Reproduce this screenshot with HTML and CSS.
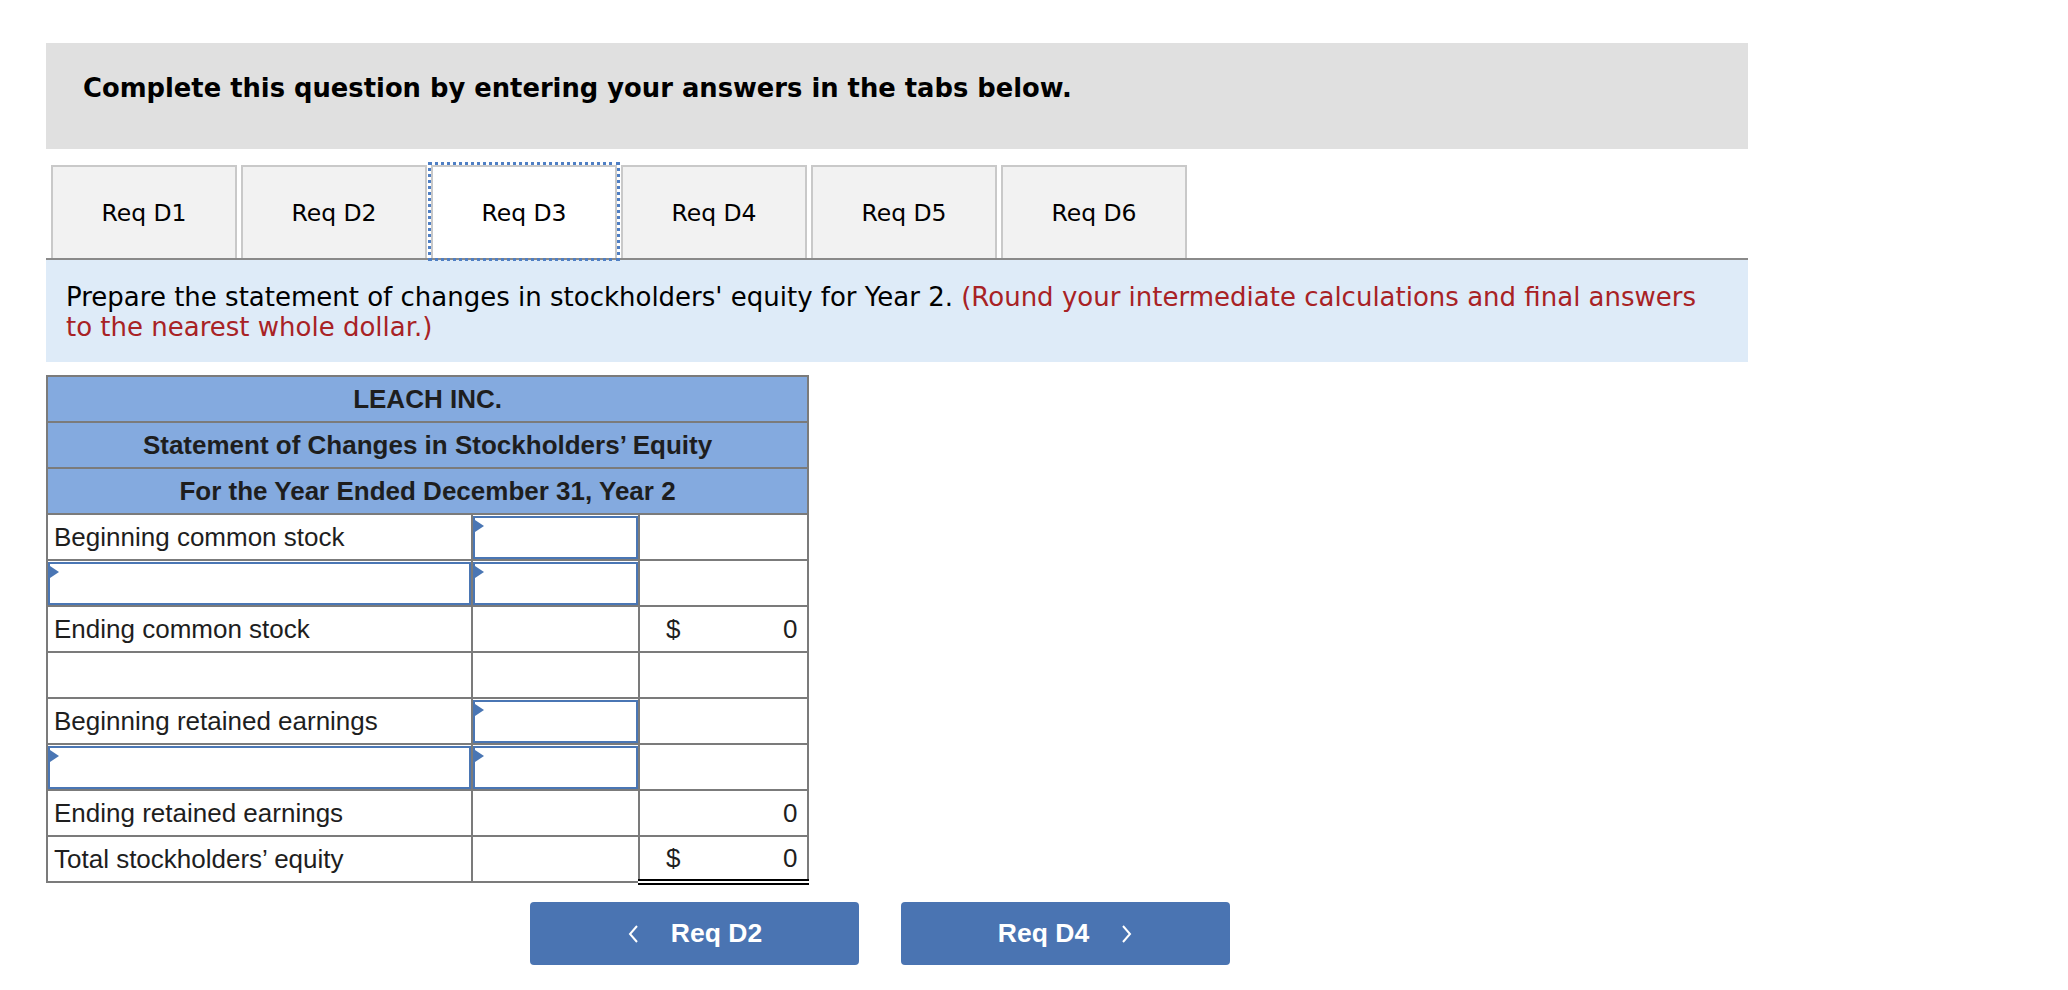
FILE: index.html
```html
<!DOCTYPE html>
<html>
<head>
<meta charset="utf-8">
<link rel="stylesheet" href="styles.css">
</head>
<body>
<div class="page">
  <div class="banner">Complete this question by entering your answers in the tabs below.</div>

  <div class="tabs">
    <div class="tab">Req D1</div>
    <div class="tab">Req D2</div>
    <div class="tab active">Req D3</div>
    <div class="tab">Req D4</div>
    <div class="tab">Req D5</div>
    <div class="tab">Req D6</div>
  </div>

  <div class="instructions">
    Prepare the statement of changes in stockholders' equity for Year 2. <span class="note">(Round your intermediate calculations and final answers to the nearest whole dollar.)</span>
  </div>

  <table class="stmt">
    <colgroup>
      <col class="c1"><col class="c2"><col class="c3">
    </colgroup>
    <tr class="head"><td colspan="3">LEACH INC.</td></tr>
    <tr class="head"><td colspan="3">Statement of Changes in Stockholders’ Equity</td></tr>
    <tr class="head"><td colspan="3">For the Year Ended December 31, Year 2</td></tr>
    <tr>
      <td class="label">Beginning common stock</td>
      <td class="inp"><div class="box"></div></td>
      <td></td>
    </tr>
    <tr>
      <td class="inp"><div class="box"></div></td>
      <td class="inp"><div class="box"></div></td>
      <td></td>
    </tr>
    <tr>
      <td class="label">Ending common stock</td>
      <td class="topline"></td>
      <td class="num"><span class="dollar">$</span><span>0</span></td>
    </tr>
    <tr>
      <td></td><td></td><td></td>
    </tr>
    <tr>
      <td class="label">Beginning retained earnings</td>
      <td class="inp"><div class="box"></div></td>
      <td></td>
    </tr>
    <tr>
      <td class="inp"><div class="box"></div></td>
      <td class="inp"><div class="box"></div></td>
      <td></td>
    </tr>
    <tr>
      <td class="label">Ending retained earnings</td>
      <td class="topline"></td>
      <td class="num"><span class="dollar"></span><span>0</span></td>
    </tr>
    <tr>
      <td class="label">Total stockholders’ equity</td>
      <td></td>
      <td class="num total"><span class="dollar">$</span><span>0</span></td>
    </tr>
  </table>

  <div class="nav">
    <button class="navbtn">
      <svg class="chev" width="12" height="20" viewBox="0 0 12 20"><path d="M10 2 L3 10 L10 18" fill="none" stroke="#fff" stroke-width="2"/></svg>
      <span>Req D2</span>
    </button>
    <button class="navbtn">
      <span>Req D4</span>
      <svg class="chev" width="12" height="20" viewBox="0 0 12 20"><path d="M2 2 L9 10 L2 18" fill="none" stroke="#fff" stroke-width="2"/></svg>
    </button>
  </div>
</div>
</body>
</html>
```

FILE: styles.css
```css
* { box-sizing: border-box; }
body {
  margin: 0;
  background: #ffffff;
  font-family: "DejaVu Sans", Verdana, sans-serif;
  color: #000;
}
.page {
  padding: 43px 0 0 46px;
  width: 1748px;
}
.banner {
  background: #e0e0e0;
  height: 106px;
  padding: 30px 0 0 37px;
  font-weight: bold;
  font-size: 25.8px;
}
.tabs {
  margin-top: 16px;
  display: flex;
  gap: 4px;
  padding-left: 5px;
  border-bottom: 2px solid #8a8a8a;
}
.tab {
  width: 186px;
  height: 93px;
  background: #f2f2f2;
  border: 2px solid #c9c9c9;
  border-bottom: none;
  display: flex;
  align-items: center;
  justify-content: center;
  font-size: 23.5px;
}
.tab.active {
  background: #ffffff;
  outline: 3px dotted #4f7fc4;
  outline-offset: 0px;
}
.instructions {
  background: #deebf8;
  padding: 22px 40px 20px 20px;
  font-size: 26px;
  line-height: 30px;
}
.note { color: #a82225; }
.stmt {
  margin-top: 13px;
  border-collapse: collapse;
  width: 761px;
  table-layout: fixed;
  font-family: "Liberation Sans", Arial, sans-serif;
  font-size: 26px;
  color: #1e1e1e;
}
.c1 { width: 425px; }
.c2 { width: 167px; }
.c3 { width: 169px; }
.stmt td {
  border: 2px solid #7b7b7b;
  height: 46px;
  padding: 0;
}
.stmt tr.head td {
  background: #84aadf;
  text-align: center;
  font-weight: bold;
}
.stmt td.label { padding-left: 6px; }
.stmt td.inp { padding: 0; }
.box {
  position: relative;
  height: 43px;
  border: 2px solid #4a76b4;
  background: #fff;
}
.box::before {
  content: "";
  position: absolute;
  left: 0;
  top: 2px;
  border-left: 9px solid #4a76b4;
  border-top: 6px solid transparent;
  border-bottom: 6px solid transparent;
}
.stmt td.topline { border-top: 2px solid #000; }
.stmt td.num {
  padding: 0 5px 0 26px;
}
.stmt td.num > span { display: inline-block; }
.stmt td.num .dollar { width: 117px; }
.stmt td.total {
  border-top: 2px solid #000;
  border-bottom: 6px double #000;
}
.nav {
  display: flex;
  gap: 42px;
  margin: 17px 0 0 484px;
}
.navbtn {
  width: 329px;
  height: 63px;
  background: #4a74b2;
  border: none;
  border-radius: 4px;
  color: #fff;
  font-family: "Liberation Sans", Arial, sans-serif;
  font-weight: bold;
  font-size: 26.5px;
  display: flex;
  align-items: center;
  justify-content: center;
  gap: 32px;
  padding: 0;
}
.chev { display: block; }
```
